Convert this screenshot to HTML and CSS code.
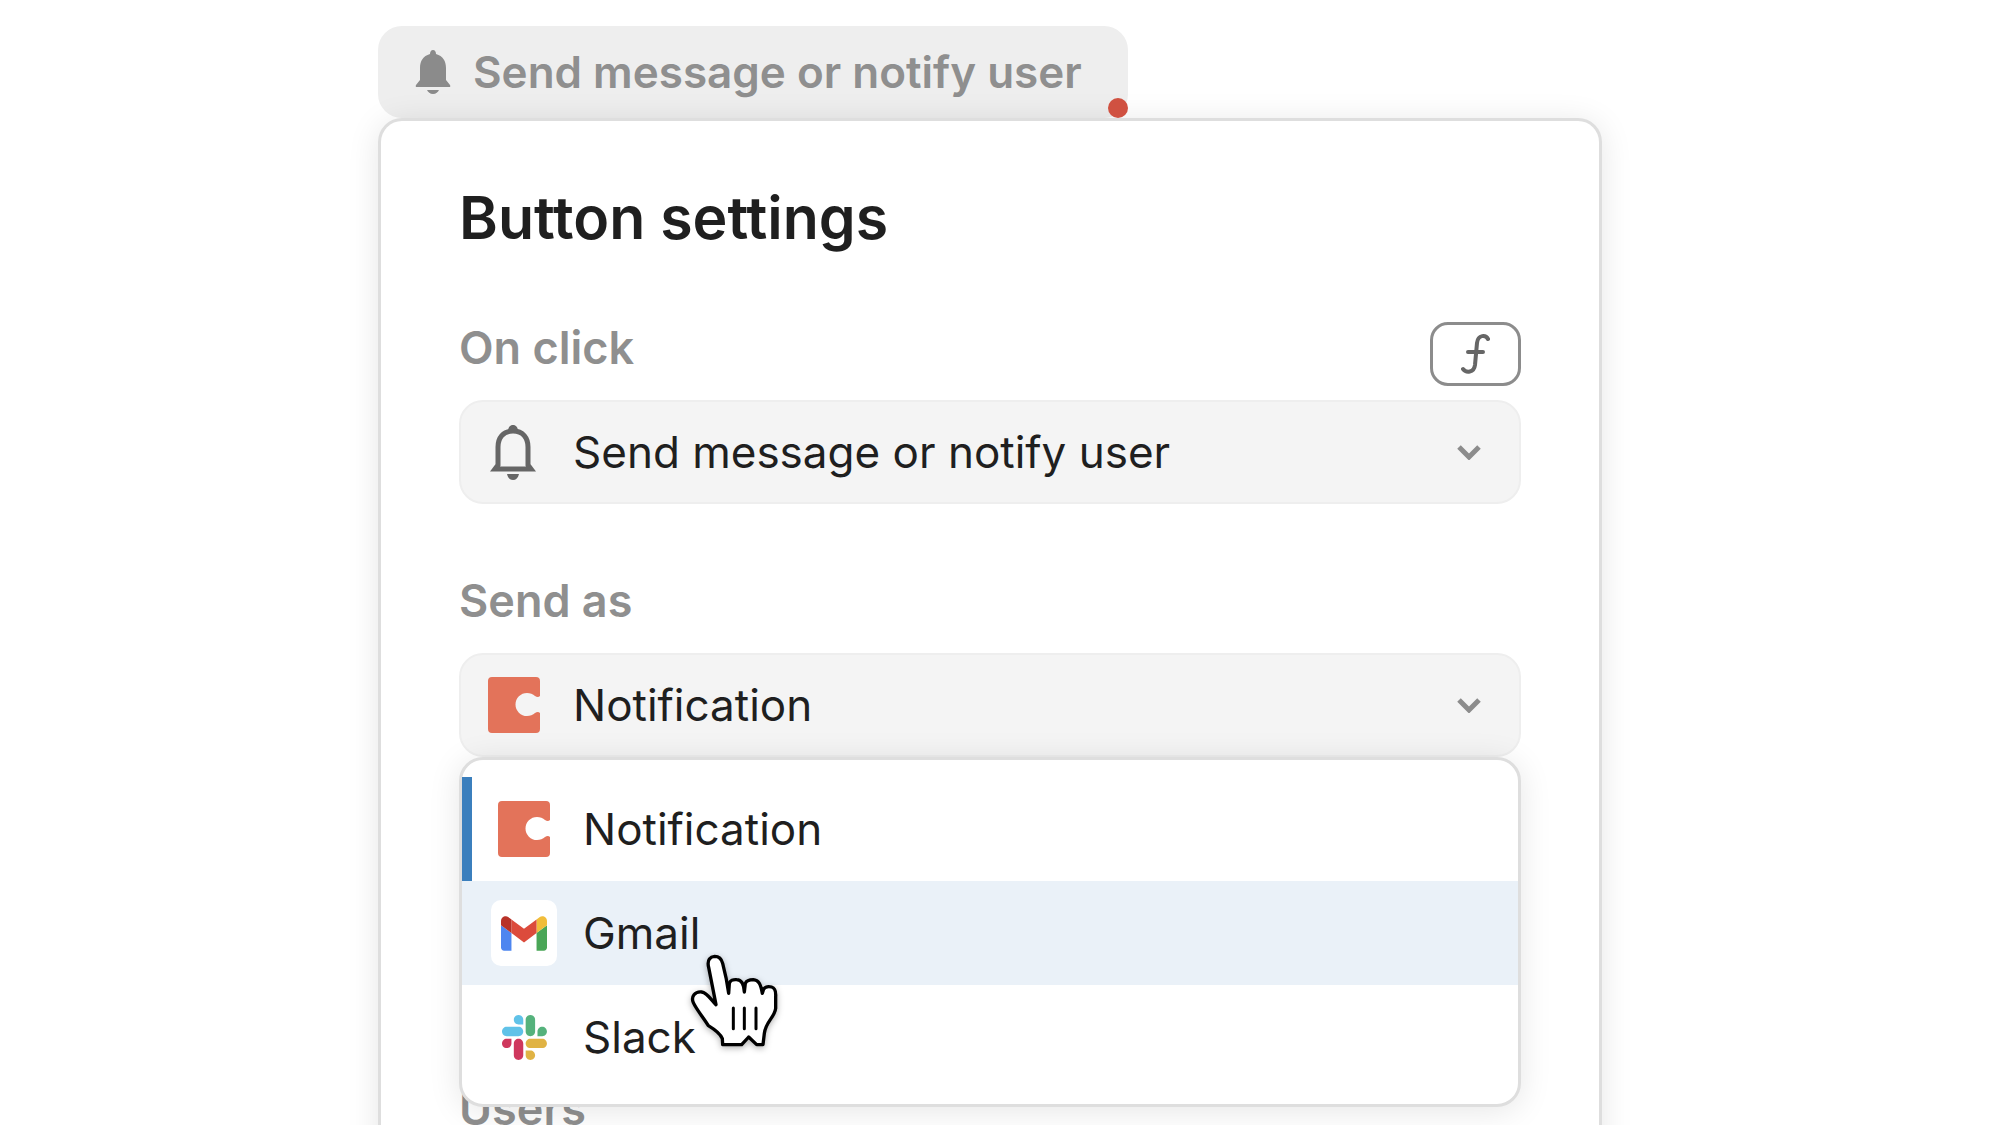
FILE: index.html
```html
<!DOCTYPE html>
<html lang="en">
<head>
  <meta charset="utf-8">
  <meta name="viewport" content="width=device-width, initial-scale=1">
  <title>Button settings</title>
  <link rel="stylesheet" href="styles.css">
</head>
<body>
  <svg class="sprite" aria-hidden="true">
    <symbol id="doc-logo" viewBox="0 0 52 56">
      <path fill="#e3735a" d="M4 0H48Q52 0 52 4V19Q50 21 47 19C45 17 42 16 39 16A11.5 11.5 0 0 0 39 39C42 39 45 38 47 36Q50 34 52 36V52Q52 56 48 56H4Q0 56 0 52V4Q0 0 4 0Z"/>
    </symbol>
    <symbol id="chevron" viewBox="0 0 24 16">
      <path d="M2 3L12 13L22 3" fill="none" stroke="#8c8c8c" stroke-width="5"/>
    </symbol>
  </svg>

  <main class="stage">
    <button class="trigger" type="button">
      <svg class="trigger-icon" viewBox="0 0 36 44" aria-hidden="true">
        <path fill="#8b8b8b" d="M18 0C20 0 21 2 21 4C28 6 31 11 31 18V30L35 35Q36 37 34 37H2Q0 37 1 35L5 30V18C5 11 8 6 15 4C15 2 16 0 18 0ZM12 40H24C23 42 21 44 18 44S13 42 12 40Z"/>
      </svg>
      <span>Send message or notify user</span>
      <span class="trigger-dot"></span>
    </button>

    <section class="panel" aria-labelledby="panel-title">
      <h1 class="panel-title" id="panel-title">Button settings</h1>

      <div class="field">
        <div class="field-head">
          <label class="field-label" for="on-click">On click</label>
          <button class="formula" type="button" aria-label="Formula">
            <svg class="formula-icon" viewBox="0 0 30 40" aria-hidden="true">
              <path d="M27 5C25 1 17 0 16 9L14 31C13 39 5 39 2 35M7 18H22" fill="none" stroke="#666" stroke-width="4" stroke-linecap="round"/>
            </svg>
          </button>
        </div>
        <div class="picker">
          <svg class="picker-icon" viewBox="0 0 56 56" aria-hidden="true">
            <path d="M27 7C17 7 12 14 12 23V41L9 45H45L42 41V23C42 14 37 7 27 7Z" fill="none" stroke="#666" stroke-width="5"/>
            <path d="M22 8C22 3 24 1 27 1S32 3 32 8ZM21 50H33C32 54 30 56 27 56S22 54 21 50Z" fill="#666"/>
          </svg>
          <select class="picker-select" id="on-click">
            <option>Send message or notify user</option>
          </select>
          <svg class="picker-chevron" aria-hidden="true"><use href="#chevron"/></svg>
        </div>
      </div>

      <div class="field field-open">
        <div class="field-head">
          <label class="field-label" for="send-as">Send as</label>
        </div>
        <div class="picker">
          <svg class="picker-icon" aria-hidden="true"><use href="#doc-logo"/></svg>
          <select class="picker-select" id="send-as">
            <option>Notification</option>
          </select>
          <svg class="picker-chevron" aria-hidden="true"><use href="#chevron"/></svg>
        </div>

        <div class="menu" role="listbox" aria-label="Send as">
          <button class="option option-selected" type="button" role="option" aria-selected="true">
            <span class="option-icon"><svg class="logo-doc" aria-hidden="true"><use href="#doc-logo"/></svg></span>
            Notification
          </button>
          <button class="option option-hover" type="button" role="option" aria-selected="false">
            <span class="option-icon option-tile">
              <svg class="logo-gmail" viewBox="52 42 88 66" aria-hidden="true">
                <path fill="#4e86f0" d="M58 108h14V74L52 59v43c0 3.32 2.69 6 6 6"/>
                <path fill="#4aa657" d="M120 108h14c3.32 0 6-2.69 6-6V59l-20 15"/>
                <path fill="#f1bd3a" d="M120 48v26l20-15v-8c0-7.42-8.47-11.65-14.4-7.2"/>
                <path fill="#dc4b3c" d="M72 74V48l24 18 24-18v26L96 92"/>
                <path fill="#b83228" d="M52 51v8l20 15V48l-5.6-4.2c-5.94-4.45-14.4-.22-14.4 7.2"/>
              </svg>
            </span>
            Gmail
          </button>
          <button class="option" type="button" role="option" aria-selected="false">
            <span class="option-icon">
              <svg class="logo-slack" viewBox="0 0 123 123" aria-hidden="true">
                <path fill="#cf375d" d="M25.8 77.6c0 7.1-5.8 12.9-12.9 12.9S0 84.7 0 77.6s5.8-12.9 12.9-12.9h12.9v12.9zM32.3 77.6c0-7.1 5.8-12.9 12.9-12.9s12.9 5.8 12.9 12.9v32.3c0 7.1-5.8 12.9-12.9 12.9s-12.9-5.8-12.9-12.9V77.6z"/>
                <path fill="#60c2e8" d="M45.2 25.8c-7.1 0-12.9-5.8-12.9-12.9S38.1 0 45.2 0s12.9 5.8 12.9 12.9v12.9H45.2zM45.2 32.3c7.1 0 12.9 5.8 12.9 12.9s-5.8 12.9-12.9 12.9H12.9C5.8 58.1 0 52.3 0 45.2s5.8-12.9 12.9-12.9h32.3z"/>
                <path fill="#55b27c" d="M97 45.2c0-7.1 5.8-12.9 12.9-12.9s12.9 5.8 12.9 12.9-5.8 12.9-12.9 12.9H97V45.2zM90.5 45.2c0 7.1-5.8 12.9-12.9 12.9s-12.9-5.8-12.9-12.9V12.9C64.7 5.8 70.5 0 77.6 0s12.9 5.8 12.9 12.9v32.3z"/>
                <path fill="#e0b344" d="M77.6 97c7.1 0 12.9 5.8 12.9 12.9s-5.8 12.9-12.9 12.9-12.9-5.8-12.9-12.9V97h12.9zM77.6 90.5c-7.1 0-12.9-5.8-12.9-12.9s5.8-12.9 12.9-12.9h32.3c7.1 0 12.9 5.8 12.9 12.9s-5.8 12.9-12.9 12.9H77.6z"/>
              </svg>
            </span>
            Slack
          </button>

          <svg class="pointer" viewBox="60 72 270 285" aria-hidden="true">
            <path d="M138 224L116 112C110 88 122 80 134 79C148 79 155 88 158 100C166 130 172 160 176 190L178 160C180 152 190 148 200 149C214 150 222 160 223 186L226 160C230 151 238 149 250 149C266 150 272 162 277 190L281 177C287 169 297 169 305 171C316 174 318 184 317 200V235C314 262 287 275 283 310L279 344H260L236 321L215 344H158L157 326C150 308 130 296 115 287C100 262 80 240 70 218C62 200 75 184 95 186C112 188 125 212 138 224Z" fill="#fff" stroke="#000" stroke-width="10" stroke-linejoin="round"/>
            <path d="M190 234V296M223 234V296M258 234V296" stroke="#000" stroke-width="9" stroke-linecap="round"/>
          </svg>
        </div>
      </div>

      <div class="field">
        <div class="field-head">
          <span class="field-label">Users</span>
        </div>
      </div>
    </section>
  </main>
</body>
</html>
```

FILE: styles.css
```css
* {
  box-sizing: border-box;
}

body {
  margin: 0;
  height: 100vh;
  overflow: hidden;
  background: #fff;
  color: #1f1f1f;
  font-family: Inter, "Liberation Sans", sans-serif;
  font-size: 44px;
  line-height: 56px;
}

button,
select {
  margin: 0;
  font: inherit;
  color: inherit;
}

.sprite {
  display: none;
}

.stage {
  display: grid;
  grid-template-columns: 378fr 1224fr 398fr;
  grid-template-rows: auto 1fr;
  min-height: 100vh;
  padding-top: 26px;
}

/* Canvas button the panel is attached to */
.trigger {
  position: relative;
  grid-column: 2;
  justify-self: start;
  display: flex;
  align-items: center;
  gap: 22px;
  height: 92px;
  padding: 0 46px 0 37px;
  border: 0;
  border-radius: 24px;
  background: #eee;
  color: #8f8f8f;
  font-weight: 600;
}

.trigger-icon {
  width: 36px;
  height: 44px;
}

.trigger-dot {
  position: absolute;
  right: 0;
  bottom: 0;
  z-index: 2;
  width: 20px;
  height: 20px;
  border-radius: 50%;
  background: #d05141;
}

.panel {
  position: relative;
  grid-column: 2;
  padding: 61px 78px 0;
  border: 3px solid #dedede;
  border-bottom: 0;
  border-radius: 24px 24px 0 0;
  background: #fff;
  box-shadow: 0 4px 32px rgba(0, 0, 0, 0.1);
}

.panel-title {
  margin: 0 0 66px;
  font-size: 59px;
  font-weight: 600;
  line-height: 72px;
}

.field {
  position: relative;
  margin-bottom: 69px;
}

.field-open {
  margin-bottom: 324px;
}

.field-head {
  display: flex;
  align-items: center;
  justify-content: space-between;
  height: 80px;
  padding-bottom: 12px;
}

.field-label {
  align-self: flex-start;
  color: #8f8f8f;
  font-size: 45px;
  font-weight: 600;
}

.formula {
  display: flex;
  align-items: center;
  justify-content: center;
  width: 91px;
  height: 64px;
  padding: 0;
  border: 3px solid #8c8c8c;
  border-radius: 18px;
  background: #fff;
}

.formula-icon {
  width: 30px;
  height: 40px;
}

.picker {
  display: flex;
  align-items: center;
  height: 104px;
  padding: 0 38px 0 25px;
  border: 2px solid #eee;
  border-radius: 24px;
  background: #f4f4f4;
}

.picker-icon {
  width: 56px;
  height: 56px;
  margin-right: 31px;
}

.picker-select {
  flex: 1;
  height: 100%;
  padding: 0;
  border: 0;
  outline: 0;
  background: transparent;
  appearance: none;
}

.picker-chevron {
  width: 24px;
  height: 16px;
}

/* Open list of the "Send as" picker */
.menu {
  position: absolute;
  top: 100%;
  left: 0;
  right: 0;
  z-index: 1;
  padding: 17px 0 15px;
  border: 3px solid #dedede;
  border-radius: 24px;
  background: #fff;
  box-shadow: 0 4px 32px rgba(0, 0, 0, 0.1);
}

.option {
  display: flex;
  align-items: center;
  gap: 26px;
  width: 100%;
  height: 104px;
  padding: 0 19px;
  border: 0;
  border-left: 10px solid transparent;
  background-color: transparent;
  text-align: left;
}

.option-selected {
  border-left-color: #3b7fbd;
}

.option-hover {
  border-left-color: #eaf1f8;
  background-color: #eaf1f8;
}

.option-icon {
  display: flex;
  align-items: center;
  justify-content: center;
  width: 66px;
  height: 66px;
}

.option-tile {
  border-radius: 10px;
  background: #fff;
}

.logo-doc {
  width: 52px;
  height: 56px;
}

.logo-gmail {
  width: 46px;
  height: 35px;
}

.logo-slack {
  width: 45px;
  height: 45px;
}

.pointer {
  position: absolute;
  left: 228px;
  top: 194px;
  width: 90px;
  height: 95px;
  overflow: visible;
  filter: drop-shadow(0 2px 3px rgba(0, 0, 0, 0.3));
}
```
